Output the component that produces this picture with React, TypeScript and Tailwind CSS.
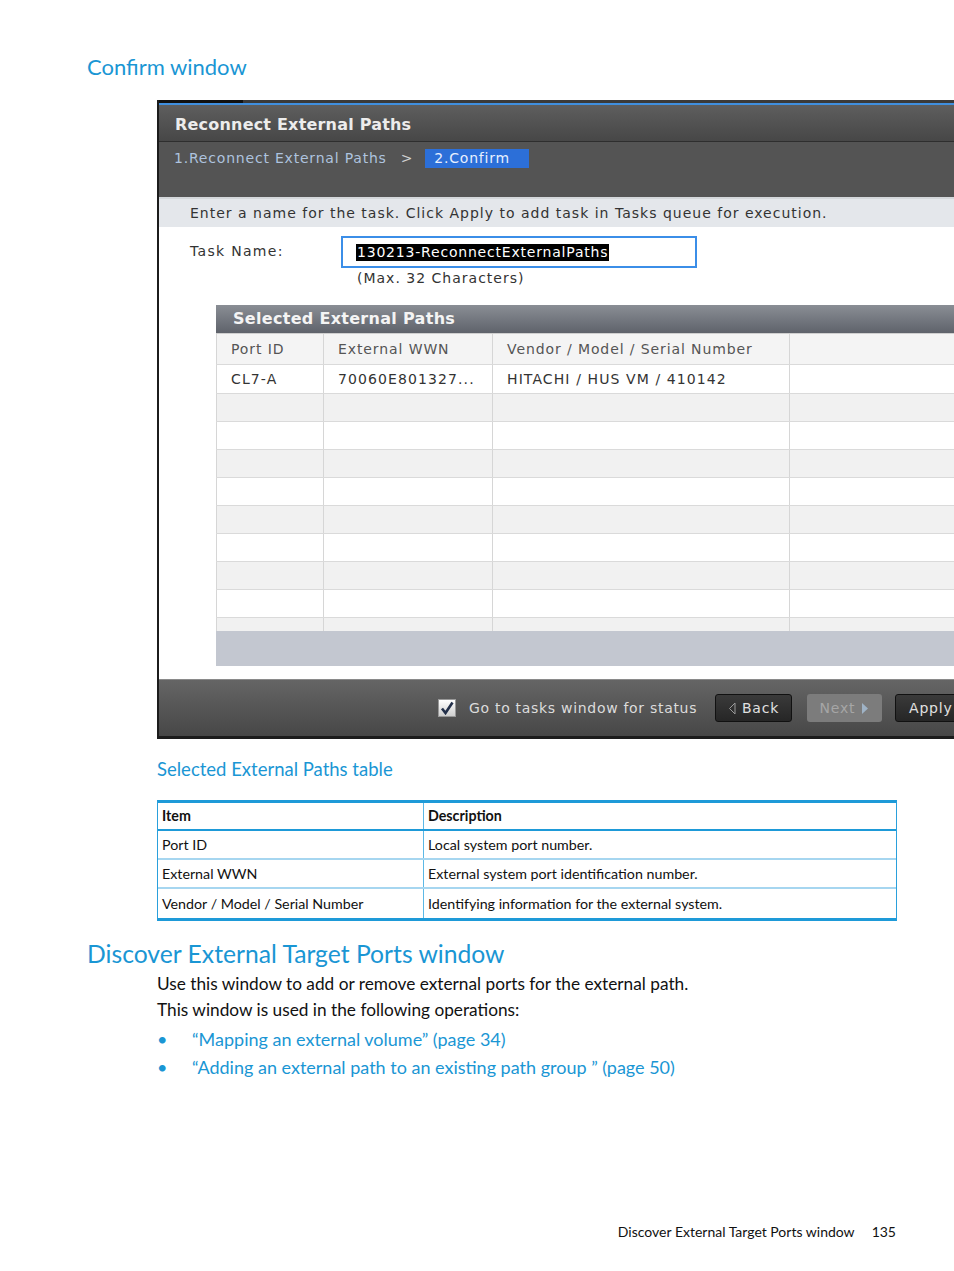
const blue = "text-[#1a96d4]";

const descRows = [
  { item: "Port ID", desc: "Local system port number." },
  { item: "External WWN", desc: "External system port identification number." },
  { item: "Vendor / Model / Serial Number", desc: "Identifying information for the external system." },
];

function PathsTable() {
  const cols = ["w-[107px]", "w-[169px]", "w-[297px]", "flex-1"];
  const emptyRows = [0, 1, 2, 3, 4, 5, 6, 7];
  return (
    <div className="ml-[57px] w-[760px] font-['DejaVu_Sans',sans-serif]">
      <div className="h-[28px] flex items-center pl-[17px] bg-gradient-to-b from-[#8a8e95] to-[#5f636b] text-[#f4f4f4] text-[16px] font-bold tracking-[0.3px]">
        Selected External Paths
      </div>
      <div className="h-[32px] flex bg-[#f4f4f4] border-t border-[#cfcfcf] border-b border-b-[#dadada] text-[14px] tracking-[0.9px] text-[#555]">
        {["Port ID", "External WWN", "Vendor / Model / Serial Number", ""].map((h, i) => (
          <div key={i} className={`${cols[i]} flex items-center pl-[14px] border-l border-[#d6d6d6]`}>
            {h}
          </div>
        ))}
      </div>
      <div className="h-[29px] flex bg-white border-b border-[#dadada] text-[14px] tracking-[1.1px] text-[#333]">
        {["CL7-A", "70060E801327...", "HITACHI / HUS VM / 410142", ""].map((c, i) => (
          <div key={i} className={`${cols[i]} flex items-center pl-[14px] border-l border-[#d6d6d6]`}>
            {c}
          </div>
        ))}
      </div>
      {emptyRows.map((r) => (
        <div
          key={r}
          className={`h-[28px] flex border-b border-[#dadada] ${r % 2 === 0 ? "bg-[#f1f1f1]" : "bg-white"}`}
        >
          {cols.map((c, i) => (
            <div key={i} className={`${c} border-l border-[#d6d6d6]`} />
          ))}
        </div>
      ))}
      <div className="h-[13px] flex bg-[#f1f1f1]">
        {cols.map((c, i) => (
          <div key={i} className={`${c} border-l border-[#d6d6d6]`} />
        ))}
      </div>
      <div className="h-[35px] bg-[#c3c7d0]" />
    </div>
  );
}

function ConfirmPanel() {
  return (
    <div className="ml-[157px] w-[830px] h-[639px] flex flex-col border-l-2 border-[#1c1c1c] bg-[#1c1c1c] font-['DejaVu_Sans',sans-serif]">
      <div className="h-[3px] flex">
        <div className="w-[84px] bg-[#111]" />
        <div className="flex-1 bg-[#3a3a3a]" />
      </div>
      <div className="h-[2px] bg-[#3f8fdf]" />
      <div className="h-[37px] flex items-center pl-[16px] pt-[3px] bg-gradient-to-b from-[#5e5e5e] to-[#474747] border-b border-[#2e2e2e] text-[#ececec] text-[16px] font-bold tracking-[0.2px]">
        Reconnect External Paths
      </div>
      <div className="h-[55px] bg-[#545454] flex items-start pt-[7px] pl-[15px] text-[14px] tracking-[0.8px]">
        <span className="text-[#aec3df] h-[19px] flex items-center">1.Reconnect External Paths</span>
        <span className="text-[#d0d0d0] h-[19px] flex items-center ml-[14px]">&gt;</span>
        <span className="ml-[12px] w-[104px] h-[19px] flex items-center pl-[9px] bg-[#2c6fd8] text-[#e8f0ff]">
          2.Confirm
        </span>
      </div>
      <div className="h-[2px] bg-[#d4d7db]" />
      <div className="h-[28px] bg-[#e4e7eb] flex items-center pl-[31px] text-[14px] tracking-[1px] text-[#333]">
        Enter a name for the task. Click Apply to add task in Tasks queue for execution.
      </div>
      <div className="h-[452px] bg-white pt-[9px]">
        <div className="flex items-start">
          <div className="w-[182px] pl-[31px] pt-[5px] text-[14px] tracking-[1.3px] text-[#333]">Task Name:</div>
          <div className="w-[356px] h-[32px] border-2 border-[#3b8ee8] flex items-center pl-[13px]">
            <span className="bg-black text-white text-[14px] tracking-[0.8px] leading-[17px] px-[1px]">
              130213-ReconnectExternalPaths
            </span>
          </div>
        </div>
        <div className="pl-[198px] mt-[1px] text-[14px] tracking-[1px] text-[#333] leading-[19px]">(Max. 32 Characters)</div>
        <div className="mt-[17px]">
          <PathsTable />
        </div>
      </div>
      <div className="h-[57px] flex items-center bg-gradient-to-b from-[#656565] to-[#474747] border-t border-[#8a8a8a] pl-[279px] text-[14px]">
        <div className="w-[18px] h-[18px] bg-gradient-to-b from-white to-[#cfcfcf] border border-[#999] flex items-center justify-center">
          <svg width="14" height="14" viewBox="0 0 14 14">
            <path d="M2 7.5 L5.5 12 L12.5 1.5" fill="none" stroke="#23304a" strokeWidth="2.6" />
          </svg>
        </div>
        <span className="ml-[13px] w-[228px] whitespace-nowrap text-[#dcdcdc] tracking-[0.7px]">Go to tasks window for status</span>
        <div className="ml-[18px] w-[77px] h-[28px] rounded-[3px] bg-gradient-to-b from-[#3a3a3a] to-[#262626] border border-[#111] flex items-center justify-center gap-[6px] text-[#e0e0e0] tracking-[0.8px]">
          <svg width="8" height="13" viewBox="0 0 8 13">
            <path d="M7 1 L1.5 6.5 L7 12 Z" fill="none" stroke="#9a9a9a" strokeWidth="1" />
          </svg>
          <span>Back</span>
        </div>
        <div className="ml-[15px] w-[75px] h-[28px] rounded-[3px] bg-[#7c7c7c] flex items-center justify-center gap-[6px] text-[#a6a6a6] tracking-[0.8px]">
          <span>Next</span>
          <svg width="8" height="13" viewBox="0 0 8 13">
            <path d="M1 1 L7 6.5 L1 12 Z" fill="#9fb3c6" />
          </svg>
        </div>
        <div className="ml-[13px] w-[77px] h-[28px] rounded-[3px] bg-gradient-to-b from-[#3a3a3a] to-[#262626] border border-[#111] flex items-center pl-[13px] text-[#e0e0e0] tracking-[0.8px]">
          Apply
        </div>
      </div>
    </div>
  );
}

function DescTable() {
  return (
    <div className="ml-[157px] w-[740px] border-x border-[#2aa0dc] border-t-[3px] border-t-[#1e9ad8] border-b-[3px] border-b-[#1e9ad8] text-[14.25px] text-[#111] font-['Lato',sans-serif]">
      <div className="h-[28px] flex border-b-2 border-[#1e9ad8] font-bold">
        <div className="w-[266px] pl-[4px] flex items-center border-r border-[#5cb8e6]">Item</div>
        <div className="flex-1 pl-[4px] flex items-center">Description</div>
      </div>
      {descRows.map((r, i) => (
        <div key={r.item} className={`h-[29px] flex ${i < descRows.length - 1 ? "border-b-2 border-[#a6d6f0]" : ""}`}>
          <div className="w-[266px] pl-[4px] flex items-center border-r border-[#5cb8e6]">{r.item}</div>
          <div className="flex-1 pl-[4px] flex items-center">{r.desc}</div>
        </div>
      ))}
    </div>
  );
}

export default function App() {
  return (
    <div className="relative w-[954px] h-[1271px] overflow-hidden bg-white font-['Lato',sans-serif]">
      <h2 className={`pt-[52px] pl-[87px] text-[22px] leading-[30px] ${blue}`}>Confirm window</h2>
      <div className="mt-[18px]">
        <ConfirmPanel />
      </div>
      <div className={`pl-[157px] mt-[18px] text-[18.5px] leading-[24px] ${blue}`}>Selected External Paths table</div>
      <div className="mt-[19px]">
        <DescTable />
      </div>
      <h2 className={`mt-[16px] pl-[87px] text-[24.7px] leading-[34px] ${blue}`}>Discover External Target Ports window</h2>
      <div className="pl-[157px] text-[17.25px] leading-[26px] text-[#111]">
        <p>Use this window to add or remove external ports for the external path.</p>
        <p>This window is used in the following operations:</p>
      </div>
      <ul className={`pl-[157px] mt-[2px] text-[18px] leading-[28px] ${blue}`}>
        <li className="flex">
          <span className="w-[35px]">•</span>
          <span>“Mapping an external volume” (page 34)</span>
        </li>
        <li className="flex">
          <span className="w-[35px]">•</span>
          <span>“Adding an external path to an existing path group ” (page 50)</span>
        </li>
      </ul>
      <div className="absolute left-0 right-[58px] top-[1222px] flex justify-end gap-[17px] text-[14px] leading-[20px] text-[#111]">
        <span>Discover External Target Ports window</span>
        <span>135</span>
      </div>
    </div>
  );
}
